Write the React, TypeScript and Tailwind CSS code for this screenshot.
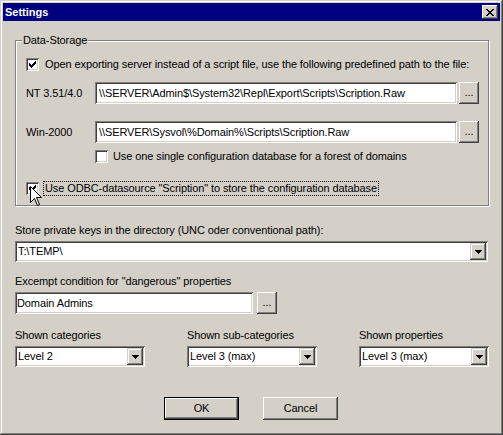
import React from "react";

const raised =
  "shadow-[inset_-1px_-1px_#404040,inset_1px_1px_#ffffff,inset_-2px_-2px_#808080,inset_2px_2px_#d4d0c8]";
const raisedArrow =
  "shadow-[inset_-1px_-1px_#404040,inset_1px_1px_#d4d0c8,inset_-2px_-2px_#808080,inset_2px_2px_#ffffff]";
const sunken =
  "shadow-[inset_1px_1px_#808080,inset_-1px_-1px_#ffffff,inset_2px_2px_#404040,inset_-2px_-2px_#d4d0c8]";

function Check() {
  const tops = [2, 3, 4, 3, 2, 1, 0];
  return (
    <svg width="7" height="7" viewBox="0 0 7 7" shapeRendering="crispEdges">
      {tops.map((t, i) => (
        <rect key={i} x={i} y={t} width="1" height="3" fill="#000" />
      ))}
    </svg>
  );
}

function Checkbox({ checked }: { checked?: boolean }) {
  return (
    <div className={`w-[13px] h-[13px] shrink-0 bg-white flex items-center justify-center ${sunken}`}>
      {checked ? <Check /> : null}
    </div>
  );
}

function Arrow() {
  return (
    <svg width="7" height="4" viewBox="0 0 7 4" shapeRendering="crispEdges">
      <rect x="0" y="0" width="7" height="1" fill="#000" />
      <rect x="1" y="1" width="5" height="1" fill="#000" />
      <rect x="2" y="2" width="3" height="1" fill="#000" />
      <rect x="3" y="3" width="1" height="1" fill="#000" />
    </svg>
  );
}

function Combo({ value, className }: { value: string; className: string }) {
  return (
    <div className={`h-[21px] bg-white p-[2px] flex items-center ${sunken} ${className}`}>
      <div className="flex-1 pl-[1px] whitespace-nowrap overflow-hidden">{value}</div>
      <div className={`w-[16px] h-[17px] bg-[#d4d0c8] flex items-center justify-center ${raisedArrow}`}>
        <Arrow />
      </div>
    </div>
  );
}

function Field({ value, className }: { value: string; className: string }) {
  return (
    <div className={`h-[22px] bg-white flex items-center whitespace-nowrap overflow-hidden ${sunken} ${className}`}>
      {value}
    </div>
  );
}

function DotsButton() {
  return (
    <div className={`w-[20px] h-[22px] ml-[2px] bg-[#d4d0c8] flex items-center justify-center pb-[2px] ${raised}`}>
      ...
    </div>
  );
}

export default function App() {
  return (
    <div
      className="relative w-[503px] h-[435px] bg-[#d4d0c8] p-[3px] flex flex-col text-black text-[11px] leading-[13px] tracking-[-0.1px] font-['Liberation_Sans',Arial,sans-serif] shadow-[inset_-1px_-1px_#404040,inset_1px_1px_#d4d0c8,inset_-2px_-2px_#808080,inset_2px_2px_#ffffff] select-none"
    >
      {/* Title bar */}
      <div className="h-[18px] bg-[#000080] flex items-center justify-between pl-[2px] pr-[2px]">
        <span className="text-white font-bold tracking-normal">Settings</span>
        <div className={`w-[16px] h-[14px] bg-[#d4d0c8] flex items-center justify-center ${raised}`}>
          <svg width="8" height="7" viewBox="0 0 8 7" shapeRendering="crispEdges">
            {[0, 1, 2, 3, 4, 5, 6].map((i) => (
              <React.Fragment key={i}>
                <rect x={i} y={i} width="2" height="1" fill="#000" />
                <rect x={6 - i} y={i} width="2" height="1" fill="#000" />
              </React.Fragment>
            ))}
          </svg>
        </div>
      </div>

      {/* Body */}
      <div className="flex flex-col pl-[12px]">
        {/* Group box */}
        <div className="relative mt-[19px] w-[474px] border border-[#808080] shadow-[inset_1px_1px_#ffffff,1px_1px_#ffffff] flex flex-col pl-[10px] pr-[9px] pt-[17px] pb-[9px]">
          <span className="absolute -top-[7px] left-[6px] px-[1px] bg-[#d4d0c8]">Data-Storage</span>

          <div className="h-[13px] flex items-center">
            <Checkbox checked />
            <span className="ml-[6px] whitespace-nowrap">
              Open exporting server instead of a script file, use the following predefined path to the file:
            </span>
          </div>

          <div className="mt-[11px] h-[22px] flex items-center">
            <span className="w-[69px] shrink-0">NT 3.51/4.0</span>
            <Field className="w-[362px] pl-[4px]" value="\\SERVER\Admin$\System32\Repl\Export\Scripts\Scription.Raw" />
            <DotsButton />
          </div>

          <div className="mt-[17px] h-[22px] flex items-center">
            <span className="w-[69px] shrink-0">Win-2000</span>
            <Field className="w-[362px] pl-[4px]" value="\\SERVER\Sysvol\%Domain%\Scripts\Scription.Raw" />
            <DotsButton />
          </div>

          <div className="mt-[7px] h-[13px] pl-[69px] flex items-center">
            <Checkbox />
            <span className="ml-[5px] whitespace-nowrap">
              Use one single configuration database for a forest of domains
            </span>
          </div>

          <div className="mt-[18px] h-[15px] flex items-center">
            <Checkbox checked />
            <span className="ml-[4px] h-[15px] px-[1px] border border-dotted border-black flex items-center whitespace-nowrap">
              Use ODBC-datasource "Scription" to store the configuration database
            </span>
          </div>
        </div>

        <div className="mt-[18px] whitespace-nowrap">
          Store private keys in the directory (UNC oder conventional path):
        </div>
        <Combo className="mt-[4px] w-[473px]" value="T:\TEMP\" />

        <div className="mt-[13px] whitespace-nowrap">Excempt condition for "dangerous" properties</div>
        <div className="mt-[4px] h-[22px] flex items-center">
          <Field className="w-[238px] pl-[2px]" value="Domain Admins" />
          <div className="ml-[2px]">
            <DotsButton />
          </div>
        </div>

        <div className="mt-[15px] w-[474px] flex justify-between">
          <div className="w-[130px] flex flex-col">
            <span className="whitespace-nowrap">Shown categories</span>
            <Combo className="mt-[4px] w-[130px]" value="Level 2" />
          </div>
          <div className="w-[130px] flex flex-col">
            <span className="whitespace-nowrap">Shown sub-categories</span>
            <Combo className="mt-[4px] w-[130px]" value="Level 3 (max)" />
          </div>
          <div className="w-[130px] flex flex-col">
            <span className="whitespace-nowrap">Shown properties</span>
            <Combo className="mt-[4px] w-[130px]" value="Level 3 (max)" />
          </div>
        </div>
      </div>

      {/* Buttons */}
      <div className="mt-[30px] flex justify-center gap-[24px] pr-[1px]">
        <div className="w-[75px] h-[23px] border border-black">
          <div className={`w-full h-full bg-[#d4d0c8] flex items-center justify-center ${raised}`}>OK</div>
        </div>
        <div className={`w-[75px] h-[23px] bg-[#d4d0c8] flex items-center justify-center ${raised}`}>Cancel</div>
      </div>

      {/* Mouse cursor */}
      <svg
        className="absolute left-[30px] top-[186px]"
        width="13"
        height="21"
        viewBox="0 0 13 21"
      >
        <path
          d="M0.5 0.5 L0.5 16.5 L4.5 12.5 L7.5 19.5 L9.5 18.5 L6.5 11.5 L11.5 11.5 Z"
          fill="#ffffff"
          stroke="#000000"
          strokeWidth="1"
        />
      </svg>
    </div>
  );
}
